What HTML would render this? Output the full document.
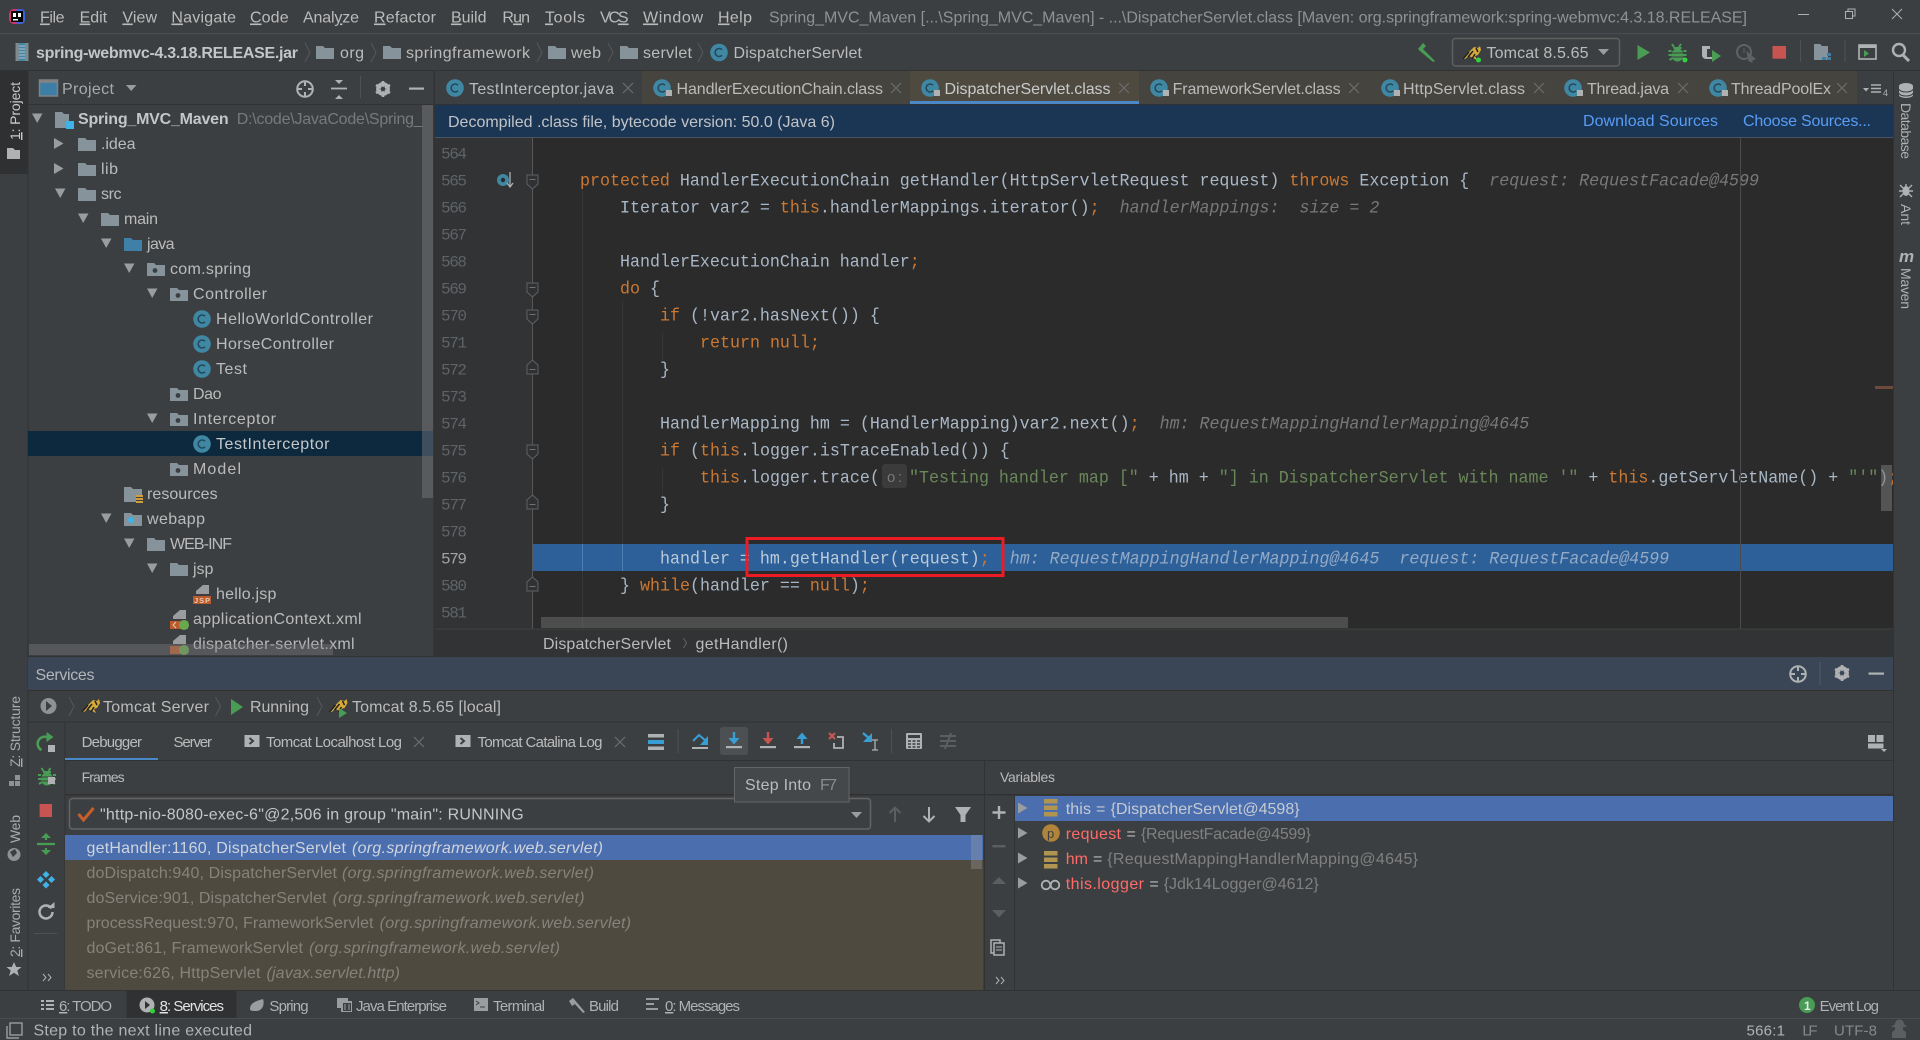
<!DOCTYPE html>
<html lang="en"><head><meta charset="utf-8"><title>Spring_MVC_Maven - DispatcherServlet.class</title>
<style>
html,body{margin:0;padding:0;background:#3c3f41;width:1920px;height:1040px;overflow:hidden}
svg{display:block}
text{font-family:"Liberation Sans",sans-serif;font-size:16px;fill:#bbbbbb;white-space:pre}
.c{font-family:"Liberation Mono",monospace;font-size:18px;fill:#a9b7c6}
.k{fill:#cc7832}.s{fill:#6a8759}
.h{fill:#787878;font-style:italic}
.hh{fill:#93a9c4;font-style:italic}
.n{font-family:"Liberation Mono",monospace;font-size:16px;fill:#606366}
.t{font-size:15px}.u{text-decoration:underline}
.i{font-style:italic}.d{fill:#85837a}
.x{stroke:#6b6d6f;stroke-width:1.2;fill:none}
.v{font-size:15px;fill:#afb1b3}
</style></head><body>
<svg xmlns="http://www.w3.org/2000/svg" width="1920" height="1040" viewBox="0 0 1920 1040">
<defs>
<path id="fo" d="M0 1h7l2 2h9v11H0z"/>
<g id="pk"><path d="M0 1h7l2 2h9v11H0z" fill="#87939a"/><circle cx="8" cy="8.5" r="2.4" fill="#3c3f41"/></g>
<g id="cl"><circle cx="9" cy="9" r="8.8" fill="#3f87a3"/><path d="M12 6.2a4 4 0 1 0 0 5.6" fill="none" stroke="#234a5b" stroke-width="1.6"/></g>
<g id="cll"><circle cx="9" cy="9" r="8.8" fill="#3f87a3"/><path d="M12 6.2a4 4 0 1 0 0 5.6" fill="none" stroke="#234a5b" stroke-width="1.6"/><rect x="13" y="11" width="6" height="6" fill="#afb1b3"/></g>
<path id="dn" d="M0 0h10.5L5.2 9.5z" fill="#9a9c9e"/>
<path id="rt" d="M0 0L9.5 5.5 0 11z" fill="#9a9c9e"/>
<g id="xx"><path class="x" d="M0 0l10 10M10 0L0 10"/></g>
<path id="ch" d="M0 0l5 9.5L0 19" fill="none" stroke="#55585a" stroke-width="1"/>
<g id="tg" fill="none" stroke="#afb1b3" stroke-width="2"><circle cx="9" cy="9" r="7.8"/><path d="M9 1v5M9 12v5M1 9h5M12 9h5"/></g>
<g id="ge"><circle cx="8" cy="8" r="5.2" fill="none" stroke="#afb1b3" stroke-width="3.4"/><path d="M8 0v16M1 4l14 8M15 4L1 12" stroke="#afb1b3" stroke-width="2.6"/><circle cx="8" cy="8" r="2.3" fill="#3c3f41"/></g>
<g id="tc"><path d="M1 14l6-7 5-5 4 1 2-2 1 4-3 5-3 1 2 4-4-2-4-2-4 3z" fill="#d6aa3a"/><path d="M1 14l6-7M6 12l5-6M10 14l3-5M14 3l2 4" stroke="#222" stroke-width="1.5" fill="none"/></g>
<g id="fold"><path d="M0 0h11v9l-5.500 5L0 9z" fill="#2f3133" stroke="#5f6264" stroke-width="1"/><path d="M2.500 4.500h6" stroke="#6f7274"/></g>
<g id="foldu"><path d="M0 14h11V5L5.500 0 0 5z" fill="#2f3133" stroke="#5f6264" stroke-width="1"/><path d="M2.500 9.500h6" stroke="#6f7274"/></g>
<g id="bug"><path d="M3.500 0l2 3M12.500 0l-2 3M0 7h3M15 7h3M0 11h3M15 11h3M1 16l3-2M17 16l-3-2" stroke="#499c54" stroke-width="2" fill="none"/><path d="M5 3h8v2H5z" fill="#499c54"/><ellipse cx="9" cy="11" rx="6" ry="6.500" fill="#499c54"/><path d="M3 9h12M3 13h12" stroke="#3c3f41"/></g>
<g id="lg"><rect width="15" height="12" fill="#afb1b3"/><path d="M5 3l3.500 3L5 9" fill="none" stroke="#3c3f41" stroke-width="2"/></g>
</defs>

<!-- base -->
<rect width="1920" height="1040" fill="#3c3f41"/>
<rect y="33" width="1920" height="1" fill="#4b4e50"/>
<rect y="70" width="1920" height="1" fill="#323232"/>

<!-- logo -->
<rect x="9" y="9" width="16" height="15" rx="5" fill="#d6316f"/><rect x="15" y="9" width="10" height="15" rx="4" fill="#3a63d8"/><rect x="11" y="11" width="12" height="11" fill="#000"/><rect x="13" y="13" width="3" height="4" fill="#fff"/><rect x="18" y="13" width="3" height="4" fill="#fff"/><rect x="13" y="19" width="5" height="1.500" fill="#fff"/>

<!-- menu -->
<g>
<text x="40" y="22.500" textLength="24.500"><tspan class="u">F</tspan>ile</text>
<text x="79.600" y="22.500" textLength="27.500"><tspan class="u">E</tspan>dit</text>
<text x="122.400" y="22.500" textLength="34.600"><tspan class="u">V</tspan>iew</text>
<text x="171.400" y="22.500" textLength="64.600"><tspan class="u">N</tspan>avigate</text>
<text x="250" y="22.500" textLength="38.600"><tspan class="u">C</tspan>ode</text>
<text x="303" y="22.500" textLength="56">Anal<tspan class="u">y</tspan>ze</text>
<text x="374" y="22.500" textLength="62"><tspan class="u">R</tspan>efactor</text>
<text x="451" y="22.500" textLength="35.500"><tspan class="u">B</tspan>uild</text>
<text x="502.400" y="22.500" textLength="27.600">R<tspan class="u">u</tspan>n</text>
<text x="545" y="22.500" textLength="40"><tspan class="u">T</tspan>ools</text>
<text x="600" y="22.500" textLength="28.600">VC<tspan class="u">S</tspan></text>
<text x="643" y="22.500" textLength="60"><tspan class="u">W</tspan>indow</text>
<text x="718" y="22.500" textLength="34"><tspan class="u">H</tspan>elp</text>
<text x="769" y="22.500" textLength="978" style="fill:#8f9294">Spring_MVC_Maven [...\Spring_MVC_Maven] - ...\DispatcherServlet.class [Maven: org.springframework:spring-webmvc:4.3.18.RELEASE]</text>
</g>
<path d="M1798 14.500h11" stroke="#afb1b3"/>
<path d="M1845.500 11.500h7v7h-7zM1848 11V9h7v7h-2" fill="none" stroke="#afb1b3"/>
<path d="M1892 9l10 10M1902 9l-10 10" stroke="#afb1b3"/>

<!-- navigation bar -->
<rect x="15.500" y="43" width="13" height="18" fill="#7d8a91"/><rect x="19" y="43" width="6" height="18" fill="#3f87a3"/><path d="M19 46h6M19 49h6M19 52h6M19 55h6M19 58h6" stroke="#b7c3c9"/>
<text x="36" y="58" textLength="262" style="font-weight:bold;fill:#c3c6c8">spring-webmvc-4.3.18.RELEASE.jar</text>
<use href="#ch" x="305" y="43"/>
<use href="#fo" x="316" y="45" fill="#87939a"/><text x="340" y="58" textLength="24">org</text>
<use href="#ch" x="371" y="43"/>
<use href="#fo" x="383" y="45" fill="#87939a"/><text x="406" y="58" textLength="124">springframework</text>
<use href="#ch" x="537" y="43"/>
<use href="#fo" x="548" y="45" fill="#87939a"/><text x="571" y="58" textLength="30">web</text>
<use href="#ch" x="608" y="43"/>
<use href="#fo" x="620" y="45" fill="#87939a"/><text x="643" y="58" textLength="49">servlet</text>
<use href="#ch" x="698" y="43"/>
<use href="#cl" x="710" y="43.500"/><text x="733.500" y="58" textLength="128.500">DispatcherServlet</text>

<path d="M1418 49l5-6 3 3-3 3 12 12-2 1-13-11z" fill="#499c54"/>
<rect x="1452.500" y="38.500" width="167" height="27.500" rx="3" fill="#3c3f41" stroke="#5e6060" stroke-width="1.500"/>
<use href="#tc" x="1462" y="45"/><circle cx="1478.500" cy="60" r="2.500" fill="#2fd33f"/>
<text x="1486.500" y="58" textLength="102">Tomcat 8.5.65</text>
<path d="M1598 49h11l-5.500 6z" fill="#9a9c9e"/>
<path d="M1637.500 45v15l12.500-7.500z" fill="#499c54"/>
<use href="#bug" x="1668.500" y="44"/><circle cx="1685" cy="60" r="2.500" fill="#2fd33f"/>
<path d="M1702 46h8v3h-3v8h5v2h-6a4 4 0 0 1-4-4z" fill="#afb1b3"/><path d="M1712 50l9 6-9 6z" fill="#499c54"/>
<circle cx="1744" cy="52" r="7" fill="none" stroke="#5f6264" stroke-width="2"/><path d="M1744 48v5M1747 52l8 7-3 1v2l-3-1z" fill="#5f6264" stroke="#5f6264"/>
<rect x="1772.500" y="46" width="13.500" height="12.700" fill="#c75450"/>
<rect x="1800" y="40" width="1" height="22" fill="#4f5254"/>
<path d="M1814 44h6l2 2h6v14h-14z" fill="#87939a"/><rect x="1827" y="53" width="4" height="3" fill="#3d7ea6"/><rect x="1822" y="57" width="4" height="3" fill="#3d7ea6"/><rect x="1827" y="57" width="4" height="3" fill="#3d7ea6"/>
<rect x="1844.500" y="40" width="1" height="22" fill="#4f5254"/>
<rect x="1859" y="45" width="17" height="14" fill="none" stroke="#afb1b3" stroke-width="1.600"/><rect x="1859" y="45" width="17" height="3" fill="#afb1b3"/><path d="M1864 50l5 3.500-5 3.500z" fill="#499c54"/>
<circle cx="1899" cy="50" r="6" fill="none" stroke="#afb1b3" stroke-width="2.400"/><path d="M1903 55l6 6" stroke="#afb1b3" stroke-width="3"/>

<!-- left stripe -->
<rect x="27.500" y="71" width="1" height="919" fill="#323232"/>
<rect x="0" y="71" width="27.500" height="103" fill="#2e3031"/>
<text transform="translate(20 140) rotate(-90)" textLength="58" style="font-size:14px;fill:#c8cacc"><tspan class="u">1</tspan>: Project</text>
<path d="M7 148h6l2 2h5v9H7z" fill="#afb1b3"/>
<text transform="translate(20 767) rotate(-90)" textLength="71" style="font-size:14px;fill:#a9abad"><tspan class="u">Z</tspan>: Structure</text>
<path d="M15 775h5v5h-5zM9 781h5v5H9zM15 781h5v5h-5z" fill="#8f9193"/>
<text transform="translate(20 843) rotate(-90)" textLength="28" style="font-size:14px;fill:#a9abad">Web</text>
<circle cx="14" cy="854.500" r="6.500" fill="#8f9193"/><path d="M10 852l5-3 2 4-4 4z" fill="#3c3f41"/>
<text transform="translate(20 957) rotate(-90)" textLength="69" style="font-size:14px;fill:#a9abad"><tspan class="u">2</tspan>: Favorites</text>
<path d="M14 962l2.200 5h5.300l-4.200 3.500 1.600 5.500-4.900-3.200-4.900 3.200 1.600-5.500L6.500 967h5.300z" fill="#afb1b3"/>

<!-- project header -->
<rect x="39.500" y="80" width="18" height="16" fill="#3d7ea6" stroke="#7e8284" stroke-width="1.500"/><rect x="39.500" y="80" width="18" height="3" fill="#7e8284"/>
<text x="62" y="94" textLength="52" style="fill:#a7aaac">Project</text>
<path d="M126 85h10.500l-5.300 6z" fill="#9a9c9e"/>
<use href="#tg" x="296" y="80"/>
<path d="M335 80h8l-4 4zM335 99h8l-4-4z" fill="#afb1b3"/><path d="M331 88.500h16" stroke="#afb1b3" stroke-width="1.800"/>
<rect x="360" y="76" width="1" height="22" fill="#4f5254"/>
<use href="#ge" x="375" y="81"/>
<rect x="409" y="87.500" width="15" height="2.200" fill="#afb1b3"/>
<rect x="28" y="104" width="406" height="1" fill="#323232"/>

<!-- project tree -->
<rect x="28" y="431" width="405" height="25" fill="#0d293e"/>
<g>
<use href="#dn" x="32" y="113.500"/>
<path d="M55 112h7l2 2h5v7h-3v7H55z" fill="#87939a"/><rect x="66" y="121" width="8" height="8" fill="#3fb3e8"/>
<text x="78" y="124" textLength="150.600" style="font-weight:bold;fill:#c3c6c8">Spring_MVC_Maven</text>
<text x="236.700" y="124" textLength="186" style="fill:#767a7c">D:\code\JavaCode\Spring_</text>

<use href="#rt" x="54" y="138"/><use href="#fo" x="78" y="137" fill="#87939a"/><text x="101" y="149" textLength="34.500">.idea</text>
<use href="#rt" x="54" y="163"/><use href="#fo" x="78" y="162" fill="#87939a"/><text x="101" y="174" textLength="17">lib</text>
<use href="#dn" x="55" y="188.500"/><use href="#fo" x="78" y="187" fill="#87939a"/><text x="101" y="199" textLength="20.500">src</text>
<use href="#dn" x="78" y="213.500"/><use href="#fo" x="101" y="212" fill="#87939a"/><text x="124" y="224" textLength="34">main</text>
<use href="#dn" x="101" y="238.500"/><use href="#fo" x="124" y="237" fill="#3f80a8"/><text x="147" y="249" textLength="27.500">java</text>
<use href="#dn" x="124" y="263.500"/><use href="#pk" x="147" y="262"/><text x="170" y="274" textLength="81">com.spring</text>
<use href="#dn" x="147" y="288.500"/><use href="#pk" x="170" y="287"/><text x="193" y="299" textLength="74">Controller</text>
<use href="#cl" x="193" y="310"/><text x="216" y="324" textLength="157">HelloWorldController</text>
<use href="#cl" x="193" y="335"/><text x="216" y="349" textLength="118">HorseController</text>
<use href="#cl" x="193" y="360"/><text x="216" y="374" textLength="31">Test</text>
<use href="#pk" x="170" y="387"/><text x="193" y="399" textLength="28.500">Dao</text>
<use href="#dn" x="147" y="413.500"/><use href="#pk" x="170" y="412"/><text x="193" y="424" textLength="83">Interceptor</text>
<use href="#cl" x="193" y="435"/><text x="216" y="449" textLength="113.500" style="fill:#c5c8ca">TestInterceptor</text>
<use href="#pk" x="170" y="462"/><text x="193" y="474" textLength="48">Model</text>
<path d="M124 487h7l2 2h9v6h-6v7h-12z" fill="#87939a"/><path d="M136 496h7M136 499h7M136 502h7" stroke="#d19e3b" stroke-width="2"/><text x="147" y="499" textLength="70.600">resources</text>
<use href="#dn" x="101" y="513.500"/><use href="#fo" x="124" y="512" fill="#87939a"/><circle cx="131" cy="520" r="3" fill="#3fb3e8"/><text x="147" y="524" textLength="58">webapp</text>
<use href="#dn" x="124" y="538.500"/><use href="#fo" x="147" y="537" fill="#87939a"/><text x="170" y="549" textLength="62">WEB-INF</text>
<use href="#dn" x="147" y="563.500"/><use href="#fo" x="170" y="562" fill="#87939a"/><text x="193" y="574" textLength="20.400">jsp</text>
<path d="M196 594v-3l7-6h6v9z" fill="#9a9c9e"/><rect x="193" y="596" width="18" height="8" fill="#bb5a2a"/><text x="194" y="603" textLength="16" style="font-size:7.500px;fill:#e8c9b8;font-weight:bold">JSP</text><text x="216" y="599" textLength="60.400">hello.jsp</text>
<path d="M173 619v-3l7-6h6v9z" fill="#9a9c9e"/><rect x="170" y="621" width="18" height="8" fill="#bb5a2a"/><path d="M176 622l-3 3 3 3" stroke="#e8c9b8" fill="none"/><circle cx="184" cy="625" r="5" fill="#6aa84f"/><text x="193" y="624" textLength="168.600">applicationContext.xml</text>
<path d="M173 644v-3l7-6h6v9z" fill="#9a9c9e"/><rect x="170" y="646" width="18" height="8" fill="#bb5a2a"/><circle cx="184" cy="650" r="5" fill="#6aa84f"/><text x="193" y="649" textLength="161.600">dispatcher-servlet.xml</text>
</g>
<rect x="422" y="105" width="11" height="393" fill="#7a7d80" fill-opacity=".45"/>
<rect x="29" y="644" width="304" height="11" fill="#7a7d80" fill-opacity=".4"/>
<rect x="433.500" y="71" width="1.500" height="586" fill="#323232"/>

<!-- tabs -->
<rect x="642" y="71" width="268" height="33" fill="#45443e"/>
<rect x="910" y="71" width="229" height="33" fill="#4e4a3f"/>
<rect x="910" y="101" width="229" height="4" fill="#4a88c7"/>
<rect x="1139" y="71" width="718" height="33" fill="#45443e"/>
<use href="#cl" x="446" y="79"/><text x="469" y="94" textLength="145">TestInterceptor.java</text><use href="#xx" x="623" y="83"/>
<use href="#cll" x="653" y="79"/><text x="676.500" y="94" textLength="206.500">HandlerExecutionChain.class</text><use href="#xx" x="891" y="83"/>
<use href="#cll" x="921" y="79"/><text x="944.500" y="94" textLength="166" style="fill:#c8cacc">DispatcherServlet.class</text><use href="#xx" x="1119" y="83"/>
<use href="#cll" x="1150" y="79"/><text x="1172.600" y="94" textLength="168">FrameworkServlet.class</text><use href="#xx" x="1349" y="83"/>
<use href="#cll" x="1381" y="79"/><text x="1403" y="94" textLength="122">HttpServlet.class</text><use href="#xx" x="1534" y="83"/>
<use href="#cll" x="1564" y="79"/><text x="1587" y="94" textLength="82">Thread.java</text><use href="#xx" x="1678" y="83"/>
<use href="#cll" x="1709" y="79"/><text x="1731" y="94" textLength="100">ThreadPoolEx</text><use href="#xx" x="1837" y="83"/>
<path d="M1863 88h6l-3 3.500z" fill="#afb1b3"/><path d="M1871 85h10M1871 88.500h10M1871 92h10" stroke="#afb1b3" stroke-width="1.500"/><text x="1883" y="96" style="font-size:9px;fill:#afb1b3">4</text>
<rect x="435" y="104" width="1458" height="1" fill="#323232"/>

<!-- banner -->
<rect x="435" y="105" width="1458" height="32" fill="#1b3655"/>
<rect x="435" y="137" width="1458" height="1" fill="#4a5560"/>
<text x="448" y="127" textLength="387" style="fill:#c1c4c6">Decompiled .class file, bytecode version: 50.0 (Java 6)</text>
<text x="1583" y="126" textLength="135" style="fill:#589df6">Download Sources</text>
<text x="1743" y="126" textLength="128" style="fill:#589df6">Choose Sources...</text>

<!-- right stripe -->
<rect x="1893" y="71" width="27" height="919" fill="#3c3f41"/>
<rect x="1893" y="71" width="1" height="919" fill="#323232"/>
<path d="M1899 86a7 3 0 0 1 14 0v9a7 3 0 0 1-14 0z" fill="#afb1b3"/><path d="M1899 89a7 3 0 0 0 14 0M1899 93a7 3 0 0 0 14 0" stroke="#3c3f41" fill="none"/>
<text transform="translate(1901 103) rotate(90)" textLength="56" style="font-size:14px;fill:#afb1b3">Database</text>
<path d="M1906 184v4M1900 185l4 4M1912 185l-4 4M1899 191h14M1900 197l4-4M1912 197l-4-4" stroke="#afb1b3" stroke-width="1.400"/><ellipse cx="1906" cy="191" rx="3.500" ry="5" fill="#afb1b3"/>
<text transform="translate(1901 204) rotate(90)" textLength="21" style="font-size:14px;fill:#afb1b3">Ant</text>
<text x="1899" y="262" textLength="16" style="font-size:17px;font-weight:bold;font-style:italic;fill:#afb1b3">m</text>
<text transform="translate(1901 268) rotate(90)" textLength="41" style="font-size:14px;fill:#afb1b3">Maven</text>

<!-- editor -->
<rect x="435" y="138" width="98" height="491" fill="#313335"/>
<rect x="533" y="138" width="1360" height="491" fill="#2b2b2b"/>
<rect x="582" y="190" width="1" height="439" fill="#373737"/>
<rect x="622" y="301" width="1" height="270" fill="#373737"/>
<rect x="662" y="333" width="1" height="27" fill="#373737"/><rect x="662" y="468" width="1" height="27" fill="#373737"/>
<rect x="533" y="544" width="1360" height="27" fill="#2d6099"/>
<rect x="582" y="544" width="1" height="27" fill="#4f7eb2"/><rect x="622" y="544" width="1" height="27" fill="#4f7eb2"/>
<rect x="532" y="138" width="1" height="491" fill="#555759"/>

<g transform="translate(0 -.7)">
<text class="n" x="441" y="159" textLength="26">564</text>
<text class="n" x="441" y="186" textLength="26">565</text>
<text class="n" x="441" y="213" textLength="26">566</text>
<text class="n" x="441" y="240" textLength="26">567</text>
<text class="n" x="441" y="267" textLength="26">568</text>
<text class="n" x="441" y="294" textLength="26">569</text>
<text class="n" x="441" y="321" textLength="26">570</text>
<text class="n" x="441" y="348" textLength="26">571</text>
<text class="n" x="441" y="375" textLength="26">572</text>
<text class="n" x="441" y="402" textLength="26">573</text>
<text class="n" x="441" y="429" textLength="26">574</text>
<text class="n" x="441" y="456" textLength="26">575</text>
<text class="n" x="441" y="483" textLength="26">576</text>
<text class="n" x="441" y="510" textLength="26">577</text>
<text class="n" x="441" y="537" textLength="26">578</text>
<text class="n" x="441" y="564" textLength="26" style="fill:#a4a3a3">579</text>
<text class="n" x="441" y="591" textLength="26">580</text>
<text class="n" x="441" y="618" textLength="26">581</text>
</g>

<circle cx="503" cy="180" r="6" fill="#3f87a3"/><circle cx="503" cy="180" r="2.200" fill="#2b2b2b"/><path d="M510 172v14M507 183l3 4 3-4" stroke="#afb1b3" stroke-width="1.300" fill="none"/>
<use href="#fold" x="527" y="175"/>
<use href="#fold" x="527" y="283"/>
<use href="#fold" x="527" y="310"/>
<use href="#foldu" x="527" y="360"/>
<use href="#fold" x="527" y="445"/>
<use href="#foldu" x="527" y="495"/>
<use href="#foldu" x="527" y="577"/>

<clipPath id="ed"><rect x="533" y="138" width="1360" height="491"/></clipPath>
<g clip-path="url(#ed)"><g transform="translate(0 -1)">
<text class="c" transform="translate(580 186.500) scale(.9259 1)"><tspan class="k">protected</tspan> HandlerExecutionChain getHandler(HttpServletRequest request) <tspan class="k">throws</tspan> Exception {  <tspan class="h">request: RequestFacade@4599</tspan></text>
<text class="c" transform="translate(620 213.500) scale(.9259 1)">Iterator var2 = <tspan class="k">this</tspan>.handlerMappings.iterator()<tspan class="k">;</tspan>  <tspan class="h">handlerMappings:  size = 2</tspan></text>
<text class="c" transform="translate(620 267.500) scale(.9259 1)">HandlerExecutionChain handler<tspan class="k">;</tspan></text>
<text class="c" transform="translate(620 294.500) scale(.9259 1)"><tspan class="k">do</tspan> {</text>
<text class="c" transform="translate(660 321.500) scale(.9259 1)"><tspan class="k">if</tspan> (!var2.hasNext()) {</text>
<text class="c" transform="translate(700 348.500) scale(.9259 1)"><tspan class="k">return null;</tspan></text>
<text class="c" transform="translate(660 375.500) scale(.9259 1)">}</text>
<text class="c" transform="translate(660 429.500) scale(.9259 1)">HandlerMapping hm = (HandlerMapping)var2.next()<tspan class="k">;</tspan>  <tspan class="h">hm: RequestMappingHandlerMapping@4645</tspan></text>
<text class="c" transform="translate(660 456.500) scale(.9259 1)"><tspan class="k">if</tspan> (<tspan class="k">this</tspan>.logger.isTraceEnabled()) {</text>
<text class="c" transform="translate(700 483.500) scale(.9259 1)"><tspan class="k">this</tspan>.logger.trace(</text>
<rect x="882" y="465" width="25" height="24" rx="3" fill="#3b3b3b"/>
<text x="887" y="483" textLength="15" style="font-size:15px;fill:#787878">o:</text>
<text class="c" transform="translate(909 483.500) scale(.9259 1)"><tspan class="s">"Testing handler map ["</tspan> + hm + <tspan class="s">"] in DispatcherServlet with name '"</tspan> + <tspan class="k">this</tspan>.getServletName() + <tspan class="s">"'"</tspan>)<tspan class="k">;</tspan></text>
<text class="c" transform="translate(660 510.500) scale(.9259 1)">}</text>
<text class="c" style="fill:#bcc9d6" transform="translate(660 564.500) scale(.9259 1)">handler = hm.getHandler(request)<tspan class="k">;</tspan>  <tspan class="hh">hm: RequestMappingHandlerMapping@4645  request: RequestFacade@4599</tspan></text>
<text class="c" transform="translate(620 591.500) scale(.9259 1)">} <tspan class="k">while</tspan>(handler == <tspan class="k">null</tspan>)<tspan class="k">;</tspan></text>
</g></g>
<rect x="1740" y="138" width="1" height="491" fill="#4c4c4c"/>
<rect x="1875" y="386" width="18" height="3" fill="#6e4a3d"/>
<rect x="1881" y="465" width="11" height="46" fill="#777" fill-opacity=".55"/>
<rect x="541" y="617" width="807" height="11" fill="#777" fill-opacity=".45"/>
<rect x="747" y="538.500" width="256" height="37" fill="none" stroke="#ed1c24" stroke-width="3"/>

<!-- editor breadcrumb -->
<rect x="435" y="629" width="1458" height="28" fill="#313335"/>
<rect x="435" y="628.500" width="1458" height="1" fill="#3e4042"/>
<text x="543" y="649" textLength="128">DispatcherServlet</text>
<path d="M683.500 638l3 5-3 5" fill="none" stroke="#606366"/>
<text x="695.500" y="649" textLength="92.500">getHandler()</text>

<!-- services header -->
<rect x="28" y="656" width="1865" height="1" fill="#323232"/>
<rect x="28" y="657" width="1865" height="33" fill="#3a4655"/>
<rect x="28" y="690" width="1865" height="1" fill="#323232"/>
<text x="35.500" y="680" textLength="59" style="fill:#b3b6b8">Services</text>
<use href="#tg" x="1789" y="665"/>
<rect x="1819.500" y="662" width="1" height="23" fill="#4f5a66"/>
<g transform="translate(1834 665)"><circle cx="8" cy="8" r="5.200" fill="none" stroke="#afb1b3" stroke-width="3.400"/><path d="M8 0v16M1 4l14 8M15 4L1 12" stroke="#afb1b3" stroke-width="2.600"/><circle cx="8" cy="8" r="2.300" fill="#3a4655"/></g>
<rect x="1868.500" y="672.500" width="15.500" height="2.200" fill="#afb1b3"/>

<!-- service crumbs -->
<circle cx="48.500" cy="706" r="8" fill="#8f9193"/><path d="M46 701l6 5-6 5z" fill="#3c3f41"/>
<use href="#ch" x="69" y="697"/>
<use href="#tc" x="81" y="698"/><text x="103" y="712" textLength="106">Tomcat Server</text>
<use href="#ch" x="215.500" y="697"/>
<path d="M231 699v16l12-8z" fill="#499c54"/><text x="250" y="712" textLength="59">Running</text>
<use href="#ch" x="317" y="697"/>
<use href="#tc" x="328.500" y="698"/><path d="M339 708l8 5-8 5z" fill="#499c54"/><text x="352" y="712" textLength="149">Tomcat 8.5.65 [local]</text>
<rect x="65" y="721.500" width="1828" height="1" fill="#323232"/>
<rect x="28" y="721.500" width="37" height="1" fill="#323232"/>

<!-- debugger tabs -->
<rect x="64.500" y="722" width="1" height="268" fill="#323232"/>
<text class="t" x="81.600" y="747" textLength="60.400">Debugger</text>
<text class="t" x="173.500" y="747" textLength="38.500">Server</text>
<use href="#lg" x="244.500" y="735"/><text class="t" x="266" y="747" textLength="136">Tomcat Localhost Log</text><use href="#xx" x="414" y="737"/>
<use href="#lg" x="455.500" y="735"/><text class="t" x="477.500" y="747" textLength="125">Tomcat Catalina Log</text><use href="#xx" x="615" y="737"/>
<rect x="65" y="758" width="93" height="3" fill="#4a88c7"/>
<rect x="65" y="760" width="1828" height="1" fill="#323232"/>

<!-- debug toolbar -->
<rect x="648" y="734" width="16" height="3.500" fill="#afb1b3"/><rect x="648" y="740" width="16" height="4" fill="#389fd6"/><rect x="648" y="746.500" width="16" height="3.500" fill="#afb1b3"/>
<rect x="677.500" y="729" width="1" height="24" fill="#4f5254"/>
<path d="M693 741l6-6 7 6" fill="none" stroke="#389fd6" stroke-width="2"/><path d="M708 736v9h-8z" fill="#389fd6"/><rect x="692" y="747" width="16" height="2" fill="#afb1b3"/>
<rect x="720" y="727" width="28" height="28" rx="3" fill="#4c5052"/>
<path d="M734 732v8" stroke="#389fd6" stroke-width="2.400"/><path d="M728.500 738h11l-5.500 6.500z" fill="#389fd6"/><rect x="726" y="746" width="16" height="2.200" fill="#afb1b3"/>
<path d="M768 732v8" stroke="#c75450" stroke-width="2.400"/><path d="M762.500 738h11l-5.500 6.500z" fill="#c75450"/><rect x="760" y="746" width="16" height="2.200" fill="#afb1b3"/>
<path d="M802 735v9" stroke="#389fd6" stroke-width="2.400"/><path d="M796.500 739h11l-5.500-6.500z" fill="#389fd6"/><rect x="794" y="746" width="16" height="2.200" fill="#afb1b3"/>
<path d="M829 733l6 6M835 733l-6 6" stroke="#c75450" stroke-width="2.200"/><path d="M837 737h6v11h-9v-5" fill="none" stroke="#afb1b3" stroke-width="1.800"/>
<path d="M863 733l7 6" stroke="#389fd6" stroke-width="2.400"/><path d="M872 733v9h-9z" fill="#389fd6"/><path d="M875 740v10M872 740h6M872 750h6" stroke="#afb1b3" stroke-width="1.300"/>
<rect x="891" y="729" width="1" height="24" fill="#4f5254"/>
<rect x="906" y="733" width="16" height="16" rx="1" fill="#afb1b3"/><rect x="908" y="735" width="12" height="3" fill="#3c3f41"/><path d="M908 741h3M912.500 741h3M917 741h3M908 744h3M912.500 744h3M917 744h3M908 747h3M912.500 747h3M917 747h3" stroke="#3c3f41" stroke-width="1.500"/>
<path d="M940 736h16M940 741h16M940 746h16M951 733l-6 16" stroke="#5c5f61" stroke-width="2" fill="none"/>
<rect x="1868" y="735" width="7" height="7" fill="#afb1b3"/><rect x="1876.500" y="735" width="7" height="7" fill="#afb1b3"/><rect x="1868" y="743.500" width="15.500" height="5" fill="#afb1b3"/><path d="M1881 749h6l-3 3z" fill="#afb1b3"/>

<!-- left tools -->
<path d="M41.500 750a7 7 0 0 1 5-13" fill="none" stroke="#499c54" stroke-width="2.600"/><path d="M46.500 732l7 5-7 5z" fill="#499c54"/><rect x="48" y="745" width="7" height="7" fill="#afb1b3"/>
<g transform="translate(38 768)"><use href="#bug"/><rect x="10" y="9" width="7" height="7" fill="#afb1b3"/></g>
<rect x="39.600" y="804" width="12.400" height="13" fill="#c75450"/>
<path d="M37 844h18" stroke="#499c54" stroke-width="2.200"/><path d="M46 835v5M46 848v5" stroke="#499c54" stroke-width="2.200"/><path d="M41 838l5-5 5 5zM41 850l5 5 5-5z" fill="#499c54"/>
<path d="M46 871l3.500 3.500-3.500 3.500-3.500-3.500zM40.500 876l3.500 3.500-3.500 3.500-3.500-3.500zM51.500 876l3.500 3.500-3.500 3.500-3.500-3.500zM46 881.500l3.500 3.500-3.500 3.500-3.500-3.500z" fill="#3fb3e8"/>
<path d="M52.500 912a6.500 6.500 0 1 1-1-3.500" fill="none" stroke="#afb1b3" stroke-width="2.500"/><path d="M47.500 908h7v-6z" fill="#afb1b3"/>
<rect x="34" y="933" width="23" height="1" fill="#4f5254"/>
<path d="M43 974l3 3.500-3 3.500M48 974l3 3.500-3 3.500" fill="none" stroke="#afb1b3"/>

<!-- frames / variables headers -->
<text x="81.600" y="782" textLength="43" style="font-size:14px">Frames</text>
<text x="1000" y="782" textLength="55" style="font-size:14px">Variables</text>
<rect x="65" y="794" width="1828" height="1.500" fill="#323232"/>
<rect x="984" y="761" width="1" height="229" fill="#323232"/>
<rect x="1014" y="795" width="1" height="195" fill="#323232"/>

<!-- combo -->
<rect x="69.500" y="798.500" width="801" height="30.500" rx="3" fill="#3c3f41" stroke="#646464" stroke-width="1.500"/>
<path d="M78.500 814l5 6 10-12" fill="none" stroke="#c75e2c" stroke-width="3"/>
<text x="100" y="819.500" textLength="423.700" style="fill:#c3c6c8">"http-nio-8080-exec-6"@2,506 in group "main": RUNNING</text>
<path d="M851 812h11l-5.500 6z" fill="#9a9c9e"/>
<path d="M895 808v14M889.500 813l5.500-5.500 5.500 5.500" fill="none" stroke="#5c5f61" stroke-width="2"/>
<path d="M929 807v14M923.500 816l5.500 5.500 5.500-5.500" fill="none" stroke="#afb1b3" stroke-width="2"/>
<path d="M955 807h16l-5.500 8v7h-5v-7z" fill="#afb1b3"/>

<!-- frames list -->
<rect x="65" y="860" width="918" height="130" fill="#4e4a3f"/>
<rect x="65" y="835" width="918" height="25" fill="#4b6eaf"/>
<text x="86.500" y="853" textLength="259.500" style="fill:#cfd4dc">getHandler:1160, DispatcherServlet</text><text x="352" y="853" textLength="251" class="i" style="fill:#cfd4dc">(org.springframework.web.servlet)</text>
<text class="d" x="86.500" y="878" textLength="250.500">doDispatch:940, DispatcherServlet</text><text class="d i" x="342" y="878" textLength="252">(org.springframework.web.servlet)</text>
<text class="d" x="86.500" y="903" textLength="240">doService:901, DispatcherServlet</text><text class="d i" x="332.600" y="903" textLength="252">(org.springframework.web.servlet)</text>
<text class="d" x="86.500" y="928" textLength="287">processRequest:970, FrameworkServlet</text><text class="d i" x="379.600" y="928" textLength="251.500">(org.springframework.web.servlet)</text>
<text class="d" x="86.500" y="953" textLength="216.500">doGet:861, FrameworkServlet</text><text class="d i" x="309" y="953" textLength="251">(org.springframework.web.servlet)</text>
<text class="d" x="86.500" y="978" textLength="174">service:626, HttpServlet</text><text class="d i" x="266.500" y="978" textLength="133.500">(javax.servlet.http)</text>
<rect x="971" y="835" width="11" height="34" fill="#aaa" fill-opacity=".3"/>

<!-- variables side toolbar -->
<path d="M999 806v13M992.500 812.500h13" stroke="#afb1b3" stroke-width="2.400"/>
<rect x="992.500" y="845" width="13" height="2.400" fill="#5c5f61"/>
<path d="M992 884l7-7 7 7z" fill="#5c5f61"/><path d="M992 910h14l-7 7.500z" fill="#5c5f61"/>
<rect x="991" y="940" width="9" height="13" fill="none" stroke="#afb1b3" stroke-width="1.500"/><rect x="994" y="943" width="10" height="12" fill="#3c3f41" stroke="#afb1b3" stroke-width="1.500"/><path d="M996 947h6M996 950h6" stroke="#afb1b3"/>
<path d="M996 977l3 3.500-3 3.500M1001 977l3 3.500-3 3.500" fill="none" stroke="#afb1b3"/>

<!-- variables -->
<rect x="1015" y="796" width="878" height="25" fill="#4b6eaf"/>
<use href="#rt" x="1018" y="802.500"/>
<path d="M1044 799h13.500v4.500H1044zM1044 805.500h13.500v4.500H1044zM1044 812h13.500v4.500H1044z" fill="#b0944f"/>
<text x="1065.700" y="814" textLength="25.300" style="fill:#c5cad2">this</text><text x="1096" y="814" textLength="8.500" style="fill:#c5cad2">=</text><text x="1110.600" y="814" textLength="189" style="fill:#c5cad2">{DispatcherServlet@4598}</text>
<use href="#rt" x="1018" y="827.500"/>
<circle cx="1051" cy="833" r="8.800" fill="#b0843b"/><text x="1047" y="838" style="font-size:13px;fill:#3c3f41">p</text>
<text x="1065.700" y="839" textLength="55.300" style="fill:#ff6b68">request</text><text x="1126.500" y="839" textLength="8.500">=</text><text x="1141" y="839" textLength="170" style="fill:#808080">{RequestFacade@4599}</text>
<use href="#rt" x="1018" y="852.500"/>
<path d="M1044 851h13.500v4.500H1044zM1044 857.500h13.500v4.500H1044zM1044 864h13.500v4.500H1044z" fill="#b0944f"/>
<text x="1065.700" y="864" textLength="22.300" style="fill:#ff6b68">hm</text><text x="1093" y="864" textLength="8.500">=</text><text x="1107.300" y="864" textLength="310.700" style="fill:#808080">{RequestMappingHandlerMapping@4645}</text>
<use href="#rt" x="1018" y="877.500"/>
<circle cx="1046" cy="885" r="4.300" fill="none" stroke="#afb1b3" stroke-width="1.800"/><circle cx="1055" cy="885" r="4.300" fill="none" stroke="#afb1b3" stroke-width="1.800"/>
<text x="1065.700" y="889" textLength="78.300" style="fill:#ff6b68">this.logger</text><text x="1149.400" y="889" textLength="8.500">=</text><text x="1163.700" y="889" textLength="155" style="fill:#808080">{Jdk14Logger@4612}</text>

<!-- tooltip -->
<rect x="734.500" y="767.500" width="114.500" height="34.500" fill="#45484a" stroke="#636566"/>
<text x="745" y="790" textLength="66" style="fill:#bbb">Step Into</text>
<text x="820" y="790" textLength="17" style="fill:#8a8c8e">F7</text>

<!-- bottom tool bar -->
<rect y="990" width="1920" height="1" fill="#323232"/>
<rect y="1018" width="1920" height="1" fill="#4a4d4f"/>
<rect x="126.500" y="991" width="110" height="27" fill="#2f3133"/>
<path d="M41 1001h3M46 1001h8M41 1005h3M46 1005h8M41 1009h3M46 1009h8" stroke="#afb1b3" stroke-width="2"/>
<text class="v" x="59" y="1011" textLength="53"><tspan class="u">6</tspan>: TODO</text>
<circle cx="147" cy="1005" r="7.500" fill="#afb1b3"/><path d="M145 1001l5 4-5 4z" fill="#2f3133"/><circle cx="152.500" cy="1011" r="2.500" fill="#2fd33f"/>
<text class="v" x="159.600" y="1011" textLength="64.400" style="fill:#e0e2e4"><tspan class="u">8</tspan>: Services</text>
<path d="M250 1009c0-6 6-8 13-10 2 6-1 12-7 12-3 0-6 0-6-2z" fill="#9a9c9e"/>
<text class="v" x="269.400" y="1011" textLength="39.200">Spring</text>
<path d="M337 998h11v3h4v11h-11v-4h-4z" fill="#9a9c9e"/><rect x="343" y="1003" width="8" height="8" fill="#3c3f41"/><path d="M345 1004v6M349 1004v6" stroke="#9a9c9e"/>
<text class="v" x="356" y="1011" textLength="91">Java Enterprise</text>
<rect x="474" y="998" width="14" height="13" fill="#9a9c9e"/><path d="M476 1001l3 2-3 2M480 1007h5" stroke="#3c3f41" fill="none"/>
<text class="v" x="493" y="1011" textLength="52">Terminal</text>
<path d="M569 1001l4-3 12 14-2 1-8-9-3 2z" fill="#9a9c9e"/>
<text class="v" x="589" y="1011" textLength="30">Build</text>
<path d="M646 999h13M646 1004h8M646 1009h12" stroke="#9a9c9e" stroke-width="2"/>
<text class="v" x="665" y="1011" textLength="75"><tspan class="u">0</tspan>: Messages</text>
<circle cx="1807" cy="1005" r="8" fill="#499c54"/><text x="1804" y="1010" style="font-size:12px;font-weight:bold;fill:#e8e8e8">1</text>
<text class="v" x="1819.600" y="1011" textLength="59.400">Event Log</text>

<!-- status bar -->
<rect x="10" y="1023" width="12" height="12" fill="none" stroke="#9a9c9e" stroke-width="1.400"/><path d="M7 1026v12h12" fill="none" stroke="#9a9c9e" stroke-width="1.400"/>
<text x="33.500" y="1035.500" textLength="218.500" style="fill:#b0b3b5">Step to the next line executed</text>
<text class="v" x="1746.500" y="1035.500" textLength="38.500">566:1</text>
<text class="v" x="1802.400" y="1035.500" textLength="15.200" style="fill:#85888a">LF</text>
<text class="v" x="1834" y="1035.500" textLength="43" style="fill:#85888a">UTF-8</text>
<path d="M1895 1024a4.500 4.500 0 0 1 9 0l3 3h-4v3l3 2v6h-14v-6l3-2v-3h-4z" fill="#5c5f61"/>
</svg>
</body></html>
